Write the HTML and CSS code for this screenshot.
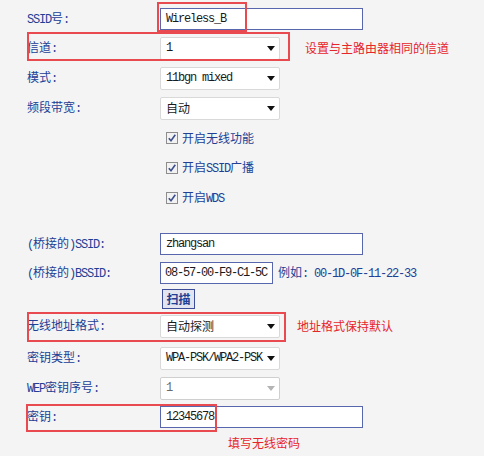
FILE: index.html
```html
<!DOCTYPE html>
<html lang="zh-CN">
<head>
<meta charset="utf-8">
<title>无线桥接设置</title>
<link rel="stylesheet" href="styles.css">
</head>
<body>
<div class="page">
  <div class="row h29">
    <div class="label"><span class="en">SSID</span>号<span class="en">:</span></div>
    <div class="input wide"><span class="en">Wireless_B</span></div>
    <div class="mark mark-ssid"></div>
  </div>
  <div class="row">
    <div class="label">信道<span class="en">:</span></div>
    <div class="select"><span class="en">1</span><svg class="arrow" width="8" height="5" viewBox="0 0 8 5"><path d="M0 0H8L4 5Z"/></svg></div>
    <span class="note note-channel">设置与主路由器相同的信道</span>
    <div class="mark mark-channel"></div>
  </div>
  <div class="row">
    <div class="label">模式<span class="en">:</span></div>
    <div class="select"><span class="en">11bgn mixed</span><svg class="arrow" width="8" height="5" viewBox="0 0 8 5"><path d="M0 0H8L4 5Z"/></svg></div>
  </div>
  <div class="row">
    <div class="label">频段带宽<span class="en">:</span></div>
    <div class="select"><span>自动</span><svg class="arrow" width="8" height="5" viewBox="0 0 8 5"><path d="M0 0H8L4 5Z"/></svg></div>
  </div>
  <div class="row">
    <div class="label"></div>
    <label class="check"><svg class="box" width="12" height="12" viewBox="0 0 12 12"><rect x="0.5" y="0.5" width="11" height="11" fill="#f2f2f2" stroke="#8d8d8d"/><path d="M2.8 6.2L5 8.8L9.3 2.8" fill="none" stroke="#3b4f8f" stroke-width="1.6"/></svg><span>开启无线功能</span></label>
  </div>
  <div class="row">
    <div class="label"></div>
    <label class="check"><svg class="box" width="12" height="12" viewBox="0 0 12 12"><rect x="0.5" y="0.5" width="11" height="11" fill="#f2f2f2" stroke="#8d8d8d"/><path d="M2.8 6.2L5 8.8L9.3 2.8" fill="none" stroke="#3b4f8f" stroke-width="1.6"/></svg><span>开启<span class="en">SSID</span>广播</span></label>
  </div>
  <div class="row">
    <div class="label"></div>
    <label class="check"><svg class="box" width="12" height="12" viewBox="0 0 12 12"><rect x="0.5" y="0.5" width="11" height="11" fill="#f2f2f2" stroke="#8d8d8d"/><path d="M2.8 6.2L5 8.8L9.3 2.8" fill="none" stroke="#3b4f8f" stroke-width="1.6"/></svg><span>开启<span class="en">WDS</span></span></label>
  </div>
  <div class="row gap-top">
    <div class="label"><span class="en">(</span>桥接的<span class="en">)SSID:</span></div>
    <div class="input wide"><span class="en">zhangsan</span></div>
  </div>
  <div class="row h28">
    <div class="label"><span class="en">(</span>桥接的<span class="en">)BSSID:</span></div>
    <div class="input short"><span class="en">08-57-00-F9-C1-5C</span></div>
    <span class="example">例如<span class="en">: 00-1D-0F-11-22-33</span></span>
  </div>
  <div class="row h23">
    <div class="label"></div>
    <div class="button">扫描</div>
  </div>
  <div class="row h32">
    <div class="label">无线地址格式<span class="en">:</span></div>
    <div class="select"><span>自动探测</span><svg class="arrow" width="8" height="5" viewBox="0 0 8 5"><path d="M0 0H8L4 5Z"/></svg></div>
    <span class="note note-addr">地址格式保持默认</span>
    <div class="mark mark-addr"></div>
  </div>
  <div class="row h32">
    <div class="label">密钥类型<span class="en">:</span></div>
    <div class="select"><span class="en">WPA-PSK/WPA2-PSK</span><svg class="arrow" width="8" height="5" viewBox="0 0 8 5"><path d="M0 0H8L4 5Z"/></svg></div>
  </div>
  <div class="row h28">
    <div class="label"><span class="en">WEP</span>密钥序号<span class="en">:</span></div>
    <div class="select disabled"><span class="en">1</span><svg class="arrow" width="8" height="5" viewBox="0 0 8 5"><path d="M0 0H8L4 5Z"/></svg></div>
  </div>
  <div class="row">
    <div class="label">密钥<span class="en">:</span></div>
    <div class="input wide"><span class="en">12345678</span></div>
    <div class="mark mark-key"></div>
  </div>
  <div class="row h22">
    <div class="label"></div>
    <span class="note note-key">填写无线密码</span>
  </div>
</div>
</body>
</html>
```

FILE: styles.css
```css
* { box-sizing: border-box; }

body {
  margin: 0;
  background: #f4f4f4;
  font: 12px/1 "Noto Sans CJK SC", sans-serif;
  color: #223f96;
}

.en {
  font-family: "Liberation Mono", "Noto Sans CJK SC", monospace;
  letter-spacing: -1.2px;
}

.page {
  padding: 4px 0 0 27px;
}

.row {
  position: relative;
  display: flex;
  align-items: center;
  height: 30px;
}
.h29 { height: 29px; }
.h28 { height: 28px; }
.h23 { height: 23px; }
.h32 { height: 32px; }
.h22 { height: 22px; }
.gap-top { margin-top: 16px; }

.label {
  flex: none;
  width: 133px;
  white-space: nowrap;
}

.input {
  flex: none;
  height: 22px;
  display: flex;
  align-items: center;
  padding-left: 5px;
  background: #fff;
  border: 1px solid #5866ad;
  color: #1a1a1a;
}
.input.wide { width: 203px; }
.input.short { width: 113px; padding-left: 4px; }

.select {
  flex: none;
  width: 120px;
  height: 23px;
  display: flex;
  align-items: center;
  justify-content: space-between;
  padding: 0 4px 0 5px;
  background: #fff;
  border: 1px solid #d9d9d9;
  border-radius: 2px;
  color: #1a1a1a;
  white-space: nowrap;
}
.select .arrow { flex: none; fill: #111; }
.select.disabled { color: #6a6a6a; border-color: #cfcfcf; }
.select.disabled .arrow { fill: #b4b4b4; }

.check {
  display: flex;
  align-items: center;
  gap: 4px;
  margin-left: 6px;
}

.example {
  margin-left: 5px;
  white-space: nowrap;
}

.button {
  margin-left: 2px;
  width: 33px;
  height: 20px;
  display: flex;
  align-items: center;
  justify-content: center;
  background: #e2e5ef;
  border: 1px solid #3c4d99;
  color: #233f94;
  font-weight: bold;
}

.note {
  color: #e6252b;
  white-space: nowrap;
}
.note-channel { margin-left: 25px; }
.note-addr { margin-left: 17px; }
.note-key { margin-left: 68px; }

.mark {
  position: absolute;
  border: 2px solid #e84a50;
  pointer-events: none;
}
.mark-ssid { left: 130px; top: -2px; width: 90px; height: 30px; }
.mark-channel { left: 0; top: -1px; width: 263px; height: 29px; }
.mark-addr { left: 0; top: 2px; width: 259px; height: 30px; }
.mark-key { left: -1px; top: 2px; width: 191px; height: 28px; }
```
